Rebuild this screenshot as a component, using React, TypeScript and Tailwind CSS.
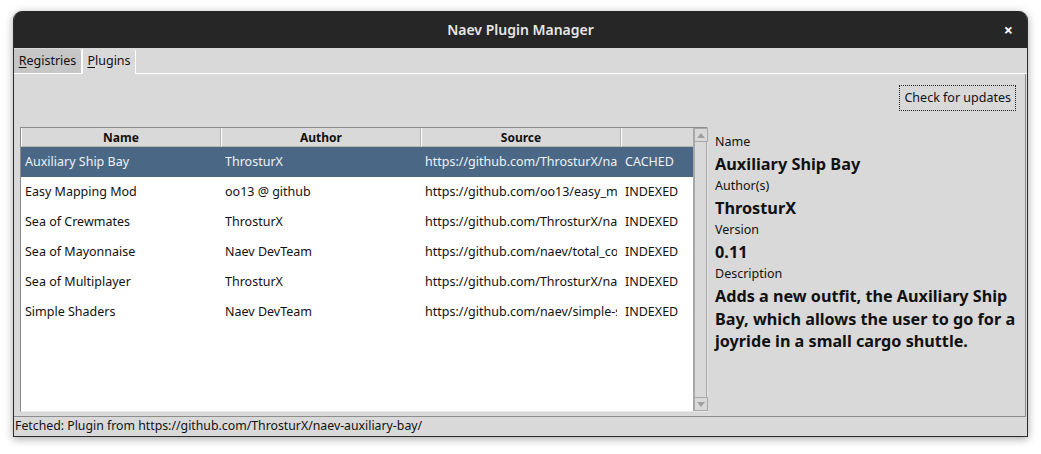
const rows = [
  { name: 'Auxiliary Ship Bay', author: 'ThrosturX', source: 'https://github.com/ThrosturX/naev-auxiliary-bay/', state: 'CACHED' },
  { name: 'Easy Mapping Mod', author: 'oo13 @ github', source: 'https://github.com/oo13/easy_mapping_mod/', state: 'INDEXED' },
  { name: 'Sea of Crewmates', author: 'ThrosturX', source: 'https://github.com/ThrosturX/naev-crewmates/', state: 'INDEXED' },
  { name: 'Sea of Mayonnaise', author: 'Naev DevTeam', source: 'https://github.com/naev/total_conversion_test/', state: 'INDEXED' },
  { name: 'Sea of Multiplayer', author: 'ThrosturX', source: 'https://github.com/ThrosturX/naev-multiplayer/', state: 'INDEXED' },
  { name: 'Simple Shaders', author: 'Naev DevTeam', source: 'https://github.com/naev/simple-shaders/', state: 'INDEXED' },
];

const Arrow = ({ up }: { up?: boolean }) => (
  <div className="h-[14px] w-[14px] border border-[#a8a8a8] bg-[#d9d9d9] flex items-center justify-center">
    <svg width="8" height="5" viewBox="0 0 8 5">
      <path d={up ? 'M0 5 L4 0 L8 5 Z' : 'M0 0 L8 0 L4 5 Z'} fill="#a0a0a0" />
    </svg>
  </div>
);

export default function App() {
  return (
    <div className="w-[1041px] h-[454px] bg-white pt-[11px] pl-[13px] font-['Noto_Sans',sans-serif] text-[12.5px] text-[#111]">
      <div className="w-[1015px] h-[426px] flex flex-col rounded-t-[9px] overflow-hidden shadow-[0_2px_8px_rgba(0,0,0,0.35)] border-x border-b border-[#2c2c2c] bg-[#d9d9d9]">
        {/* title bar */}
        <div className="h-[37px] shrink-0 bg-[#262626] relative flex items-center justify-center">
          <span className="text-[14px] font-semibold text-[#e6e6e6]">Naev Plugin Manager</span>
          <span className="absolute right-[14px] top-[10px] text-[16px] font-bold text-white leading-[18px]">×</span>
        </div>

        {/* tabs */}
        <div className="h-[26px] shrink-0 flex items-end pt-[1px]">
          <div className="h-[25px] w-[68px] bg-[#c6c6c6] border-r border-[#a8a8a8] rounded-tr-[3px] flex items-center justify-center border-b border-white">
            <span><span className="underline underline-offset-2">R</span>egistries</span>
          </div>
          <div className="h-[25px] w-[54px] bg-[#d9d9d9] border-r border-[#a0a0a0] border-l border-white rounded-tr-[3px] flex items-center justify-center">
            <span><span className="underline underline-offset-2">P</span>lugins</span>
          </div>
          <div className="flex-1 h-full border-b border-white" />
        </div>

        {/* panel */}
        <div className="flex-1 flex flex-col border-r border-b border-[#8c8c8c] mr-[1px] pl-[6px] pr-[1px] pt-[11px] pb-[4px]">
          <div className="flex justify-end pr-[8px]">
            <button className="h-[26px] px-[4px] border border-dotted border-[#222] bg-[#d9d9d9] text-[12.5px] leading-[24px]">
              Check for updates
            </button>
          </div>
          <div className="flex flex-1 mt-[16px] min-h-0">
            {/* table */}
            <div className="w-[688px] h-[285px] shrink-0 flex border border-[#8c8c8c] border-r-[#e8e8e8] border-b-[#e8e8e8]">
              <div className="w-[673px] bg-white flex flex-col">
                <div className="h-[19px] flex bg-[#d9d9d9] font-bold text-[12px] shrink-0">
                  <div className="w-[200px] pt-[2px] border-r border-[#b4b4b4] border-b border-b-[#b4b4b4] border-l border-l-white flex items-center justify-center">Name</div>
                  <div className="w-[200px] pt-[2px] border-r border-[#b4b4b4] border-b border-b-[#b4b4b4] border-l border-l-white flex items-center justify-center">Author</div>
                  <div className="w-[200px] pt-[2px] border-r border-[#b4b4b4] border-b border-b-[#b4b4b4] border-l border-l-white flex items-center justify-center">Source</div>
                  <div className="flex-1 border-b border-[#b4b4b4] border-l border-l-white" />
                </div>
                {rows.map((r, i) => (
                  <div
                    key={r.name}
                    className={`h-[30px] flex items-center whitespace-nowrap ${i === 0 ? 'bg-[#4a6886] text-[#eef2f6]' : 'text-[#111]'}`}
                  >
                    <div className="w-[200px] pl-[4px] pr-[4px]"><div className="overflow-hidden">{r.name}</div></div>
                    <div className="w-[200px] pl-[4px] pr-[4px]"><div className="overflow-hidden">{r.author}</div></div>
                    <div className="w-[200px] pl-[4px] pr-[4px]"><div className="overflow-hidden">{r.source}</div></div>
                    <div className="flex-1 pl-[4px] overflow-hidden">{r.state}</div>
                  </div>
                ))}
              </div>
              {/* scrollbar */}
              <div className="w-[14px] flex flex-col bg-[#d9d9d9] border-l border-[#a8a8a8]">
                <Arrow up />
                <div className="flex-1 border-x border-[#a8a8a8]" />
                <Arrow />
              </div>
            </div>

            {/* details */}
            <div className="flex-1 pl-[7px] pt-[6px] flex flex-col">
              <div className="leading-[18px] text-[12.5px]">Name</div>
              <div className="leading-[26px] text-[16.3px] font-bold">Auxiliary Ship Bay</div>
              <div className="leading-[18px] text-[12.5px]">Author(s)</div>
              <div className="leading-[26px] text-[16.3px] font-bold">ThrosturX</div>
              <div className="leading-[18px] text-[12.5px]">Version</div>
              <div className="leading-[26px] text-[16.3px] font-bold">0.11</div>
              <div className="leading-[18px] text-[12.5px]">Description</div>
              <div className="mt-[2px] leading-[22.5px] text-[16.2px] font-bold">
                Adds a new outfit, the Auxiliary Ship Bay, which allows the user to go for a joyride in a small cargo shuttle.
              </div>
            </div>
          </div>
        </div>

        {/* status bar */}
        <div className="h-[19px] shrink-0 flex items-center pl-[1px] text-[12.3px]">
          Fetched: Plugin from https://github.com/ThrosturX/naev-auxiliary-bay/
        </div>
      </div>
    </div>
  );
}
